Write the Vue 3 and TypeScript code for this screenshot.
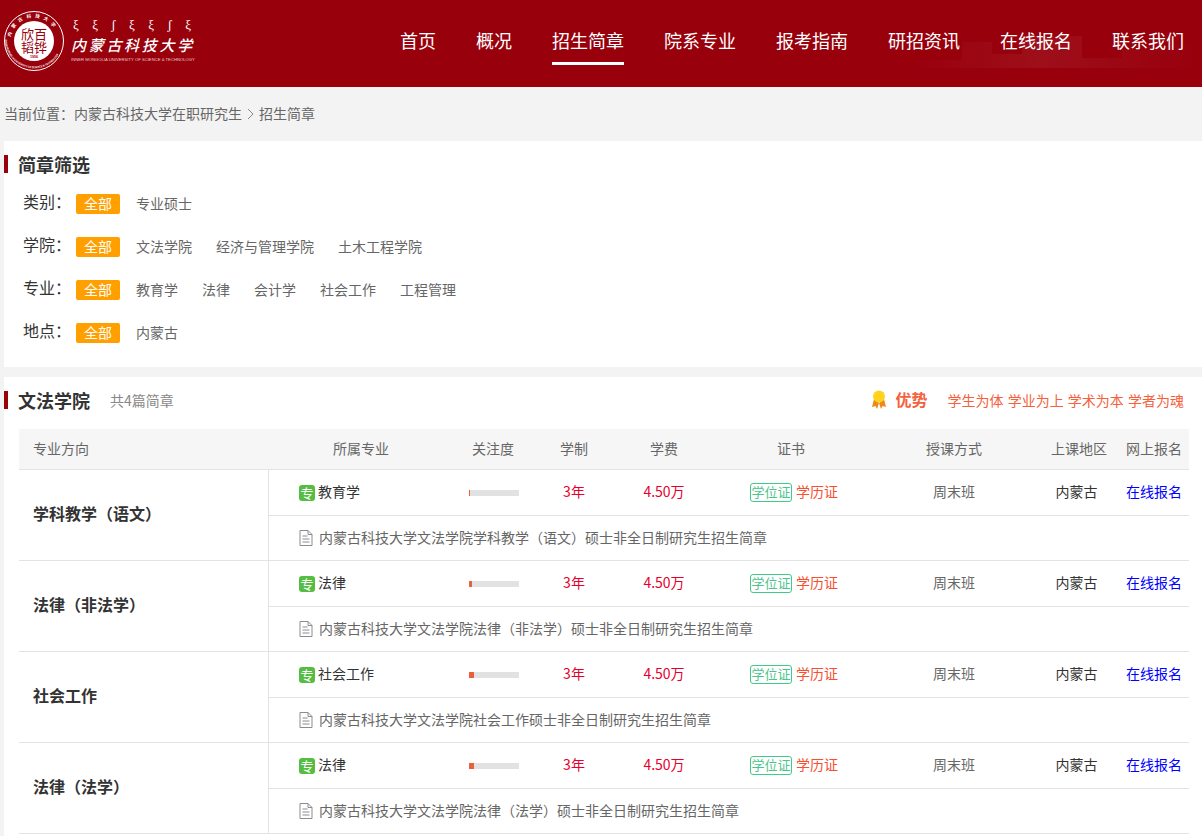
<script setup lang="ts">
interface Row {
  title: string
  major: string
  heat: number
  brochure: string
}

const navItems = ['首页', '概况', '招生简章', '院系专业', '报考指南', '研招资讯', '在线报名', '联系我们']
const monoGlyphs = ['ξ', 'ξ', 'ʃ', 'ξ', 'ξ', 'ʃ', 'ξ']

const filters = [
  { label: '类别:', options: ['专业硕士'] },
  { label: '学院:', options: ['文法学院', '经济与管理学院', '土木工程学院'] },
  { label: '专业:', options: ['教育学', '法律', '会计学', '社会工作', '工程管理'] },
  { label: '地点:', options: ['内蒙古'] },
]

const columns = ['所属专业', '关注度', '学制', '学费', '证书', '授课方式', '上课地区', '网上报名']

const rows: Row[] = [
  { title: '学科教学\uFF08语文\uFF09', major: '教育学', heat: 2, brochure: '内蒙古科技大学文法学院学科教学\uFF08语文\uFF09硕士非全日制研究生招生简章' },
  { title: '法律\uFF08非法学\uFF09', major: '法律', heat: 6, brochure: '内蒙古科技大学文法学院法律\uFF08非法学\uFF09硕士非全日制研究生招生简章' },
  { title: '社会工作', major: '社会工作', heat: 10, brochure: '内蒙古科技大学文法学院社会工作硕士非全日制研究生招生简章' },
  { title: '法律\uFF08法学\uFF09', major: '法律', heat: 10, brochure: '内蒙古科技大学文法学院法律\uFF08法学\uFF09硕士非全日制研究生招生简章' },
]

const labelText = (label: string) => label.replace(':', '\uFF1A')
const crumbHome = '当前位置\uFF1A内蒙古科技大学在职研究生'
</script>

<template>
  <div class="page">
    <header class="header">
      <svg class="skyline" width="300" height="87" viewBox="0 0 300 87" aria-hidden="true">
        <defs>
          <linearGradient id="sky-fade" x1="0" x2="1" y1="0" y2="0">
            <stop offset="0" stop-color="#fff" stop-opacity="0" />
            <stop offset="0.45" stop-color="#fff" stop-opacity="0.06" />
            <stop offset="1" stop-color="#fff" stop-opacity="0" />
          </linearGradient>
        </defs>
        <path d="M10 68V60H60V42H90V54H120V36H180V58H220V50H270V44H295V68Z" fill="url(#sky-fade)" />
      </svg>
      <div class="logo">
        <svg class="seal" width="60" height="60" viewBox="0 0 60 60">
          <defs>
            <path id="ring-top" d="M6.500 30a23.500 23.500 0 0 1 47 0" />
            <path id="ring-bottom" d="M4.500 14.500a29 29 0 1 0 51 0" />
          </defs>
          <circle cx="30" cy="30" r="29.500" fill="none" stroke="#fff" stroke-width="1" />
          <circle cx="30" cy="30" r="20" fill="#fff" />
          <text class="ring-text" font-size="4.600" letter-spacing="3.800"><textPath href="#ring-top" startOffset="4">内蒙古科技大学</textPath></text>
          <text class="ring-text" font-size="2.600"><textPath href="#ring-bottom" startOffset="14">INNER MONGOLIA UNIVERSITY OF SCIENCE &amp; TECHNOLOGY</textPath></text>
          <text class="seal-text" x="30" y="28" font-size="13" text-anchor="middle">欣百</text>
          <text class="seal-text" x="30" y="41" font-size="13" text-anchor="middle">韬铧</text>
          <text class="seal-year" x="30" y="47" font-size="3.600" text-anchor="middle">1956</text>
        </svg>
        <div class="wordmark">
          <div class="mono">
            <span v-for="(glyph, i) in monoGlyphs" :key="i">{{ glyph }}</span>
          </div>
          <div class="cn-name">内蒙古科技大学</div>
          <div class="en-name">INNER MONGOLIA UNIVERSITY OF SCIENCE &amp; TECHNOLOGY</div>
        </div>
      </div>
      <nav class="nav">
        <a v-for="item in navItems" :key="item" class="nav-item" :class="{ active: item === '招生简章' }">{{ item }}</a>
      </nav>
    </header>

    <div class="crumb">
      <span>{{ crumbHome }}</span>
      <svg class="crumb-sep" width="7" height="12" viewBox="0 0 7 12" aria-hidden="true">
        <path d="M1 1l5 5-5 5" fill="none" stroke="#888" />
      </svg>
      <span>招生简章</span>
    </div>

    <section class="panel filter-panel">
      <h2 class="panel-title">简章筛选</h2>
      <div class="filter-list">
        <div v-for="f in filters" :key="f.label" class="filter-row">
          <span class="filter-label">{{ labelText(f.label) }}</span>
          <span class="tag">全部</span>
          <a v-for="o in f.options" :key="o" class="filter-option">{{ o }}</a>
        </div>
      </div>
    </section>

    <section class="panel school-panel">
      <div class="school-head">
        <h2 class="panel-title">文法学院</h2>
        <span class="count">共4篇简章</span>
        <div class="advantage">
          <svg width="16" height="20" viewBox="0 0 16 20" aria-hidden="true">
            <path d="M3 9L1 17l3.500-1L6 19l2-6zM13 9l2 8-3.500-1L10 19l-2-6z" fill="#ee8a16" />
            <circle cx="8" cy="6.500" r="6" fill="#ffd21f" />
          </svg>
          <strong>优势</strong>
          <span class="motto">学生为体 学业为上 学术为本 学者为魂</span>
        </div>
      </div>

      <div class="table">
        <div class="table-head">
          <div class="col-title">专业方向</div>
          <div class="cols">
            <div v-for="c in columns" :key="c">{{ c }}</div>
          </div>
        </div>
        <div v-for="row in rows" :key="row.brochure" class="group">
          <div class="col-title group-title">{{ row.title }}</div>
          <div class="group-body">
            <div class="cols info-row">
              <div class="major"><i class="zhuan">专</i><span class="major-name">{{ row.major }}</span></div>
              <div class="heat"><span class="bar"><span class="bar-fill" :style="{ width: `${row.heat}%` }"></span></span></div>
              <div class="red">3年</div>
              <div class="red">4.50万</div>
              <div class="certs"><span class="cert-a">学位证</span><span class="cert-b">学历证</span></div>
              <div class="grey">周末班</div>
              <div class="place">内蒙古</div>
              <div><a class="apply">在线报名</a></div>
            </div>
            <div class="brochure">
              <svg width="14" height="16" viewBox="0 0 14 16" aria-hidden="true">
                <path d="M1 .5h8l4 4v11H1z M9 .5v4h4" fill="none" stroke="#8c8c8c" />
                <path d="M3.500 6h5M3.500 9h7M3.500 12h7" stroke="#8c8c8c" />
              </svg>
              <a>{{ row.brochure }}</a>
            </div>
          </div>
        </div>
      </div>
    </section>
  </div>
</template>

<style>
html,
body {
  margin: 0;
  background: #f3f3f3;
  overflow: hidden;
}
</style>

<style scoped>
.page {
  width: 1202px;
  height: 836px;
  overflow: hidden;
  font-family: "Noto Sans CJK SC", "Liberation Sans", sans-serif;
  font-size: 14px;
  color: #333;
  background: #f3f3f3;
}

.header {
  position: relative;
  height: 87px;
  display: flex;
  justify-content: space-between;
  background: #98000c;
  overflow: hidden;
}

.skyline {
  position: absolute;
  right: 0;
  top: 0;
}

.logo {
  position: relative;
  display: flex;
  align-items: flex-start;
  gap: 7px;
  padding: 11px 0 0 4px;
}

.seal {
  flex: none;
}

.ring-text {
  fill: #fff;
  font-weight: 700;
}

.seal-text {
  fill: #98000c;
}

.seal-year {
  fill: #98000c;
  font-family: "Liberation Sans", sans-serif;
  font-weight: 700;
}

.wordmark {
  width: 124px;
  color: #fff;
}

.mono {
  display: flex;
  justify-content: space-between;
  padding: 0 4px 0 2px;
  height: 14px;
  margin-top: 7px;
  font-size: 13px;
  line-height: 14px;
  font-family: "Liberation Serif", serif;
}

.cn-name {
  margin-top: 3px;
  height: 19px;
  font-size: 15px;
  line-height: 19px;
  font-weight: 500;
  font-style: italic;
  letter-spacing: 2.700px;
  white-space: nowrap;
}

.en-name {
  margin-top: 3px;
  font-family: "Liberation Sans", sans-serif;
  font-size: 4.200px;
  line-height: 6px;
  white-space: nowrap;
  color: #f0c8c8;
}

.nav {
  position: relative;
  display: flex;
  gap: 40px;
  padding-right: 18px;
}

.nav-item {
  height: 65px;
  padding-top: 28px;
  box-sizing: border-box;
  font-size: 18px;
  line-height: 25px;
  color: #fff;
  white-space: nowrap;
}

.nav-item.active {
  border-bottom: 3px solid #fff;
}

.crumb {
  height: 54px;
  display: flex;
  align-items: center;
  padding: 0 0 2px 4px;
  box-sizing: border-box;
  font-size: 14px;
  color: #666;
}

.crumb-sep {
  margin: 2px 5px 0;
}

.panel {
  margin-left: 4px;
  background: #fff;
}

.filter-panel {
  height: 226px;
  padding-top: 14px;
  box-sizing: border-box;
  margin-bottom: 10px;
}

.panel-title {
  margin: 0;
  height: 18px;
  padding-left: 10px;
  border-left: 4px solid #98000c;
  font-size: 18px;
  line-height: 18px;
  font-weight: 700;
  color: #333;
}

.filter-list {
  margin-top: 21px;
  padding-left: 19px;
  display: flex;
  flex-direction: column;
  gap: 23px;
}

.filter-row {
  height: 20px;
  display: flex;
  align-items: center;
}

.filter-label {
  width: 53px;
  font-size: 16px;
  color: #333;
  margin-top: -6px;
}

.tag {
  width: 44px;
  height: 20px;
  margin-right: 16px;
  border-radius: 2px;
  background: #ff9f00;
  color: #fff;
  text-align: center;
  line-height: 18px;
}

.filter-option {
  margin-right: 24px;
  padding-bottom: 2px;
  color: #666;
}

.school-panel {
  height: 459px;
  padding-top: 14px;
  box-sizing: border-box;
}

.school-head {
  display: flex;
  align-items: center;
  height: 18px;
  padding-right: 18px;
}

.count {
  margin-left: 20px;
  padding-bottom: 1px;
  color: #888;
}

.advantage {
  margin-left: auto;
  display: flex;
  align-items: center;
  color: #f4613c;
}

.advantage strong {
  margin-left: 9px;
  font-size: 16px;
  padding-bottom: 2px;
}

.motto {
  margin-left: 20px;
  padding-bottom: 1px;
  word-spacing: 1px;
}

.table {
  margin: 20px 13px 0 15px;
}

.table-head {
  display: flex;
  height: 41px;
  line-height: 38px;
  background: #f6f6f6;
  border-bottom: 1px solid #e3e3e3;
  box-sizing: border-box;
  color: #666;
}

.col-title {
  width: 250px;
  flex: none;
  box-sizing: border-box;
  padding-left: 14px;
}

.cols {
  flex: 1;
  display: grid;
  grid-template-columns: 184px 80px 82px 98px 156px 170px 80px 70px;
  text-align: center;
}

.group {
  display: flex;
  border-bottom: 1px solid #e3e3e3;
}

.group-title {
  align-self: center;
  padding-bottom: 5px;
  font-size: 16px;
  font-weight: 700;
  color: #333;
}

.group-body {
  flex: 1;
  border-left: 1px solid #e3e3e3;
  margin-left: -1px;
}

.info-row {
  height: 46px;
  line-height: 43px;
  border-bottom: 1px solid #e3e3e3;
  box-sizing: border-box;
}

.major {
  display: flex;
  align-items: center;
  padding-left: 30px;
  text-align: left;
}

.major-name {
  padding-bottom: 2px;
}

.zhuan {
  width: 16px;
  height: 16px;
  margin-right: 3px;
  border-radius: 3px;
  background: #55bd42;
  color: #fff;
  font-style: normal;
  font-size: 13px;
  line-height: 15px;
  text-align: center;
}

.heat {
  padding-left: 2px;
}

.bar {
  display: inline-block;
  width: 50px;
  height: 6px;
  margin-top: 20px;
  vertical-align: top;
  background: #e2e2e2;
}

.bar-fill {
  display: block;
  height: 100%;
  background: #e9603c;
}

.red {
  color: #e6002d;
}

.certs {
  display: flex;
  align-items: center;
  justify-content: center;
  gap: 4px;
  padding-left: 6px;
  color: #f5502f;
}

.cert-a {
  width: 42px;
  height: 19px;
  box-sizing: border-box;
  border: 1px solid #3fcc86;
  border-radius: 3px;
  color: #4cc58d;
  font-size: 13px;
  line-height: 15px;
}

.cert-b {
  line-height: 17px;
  padding-bottom: 2px;
}

.grey {
  color: #666;
}

.place {
  padding-right: 5px;
  color: #333;
}

.apply {
  color: #0000ff;
}

.brochure {
  height: 44px;
  display: flex;
  align-items: center;
  gap: 6px;
  padding-left: 30px;
  color: #666;
}

.brochure a {
  padding-bottom: 3px;
}
</style>
